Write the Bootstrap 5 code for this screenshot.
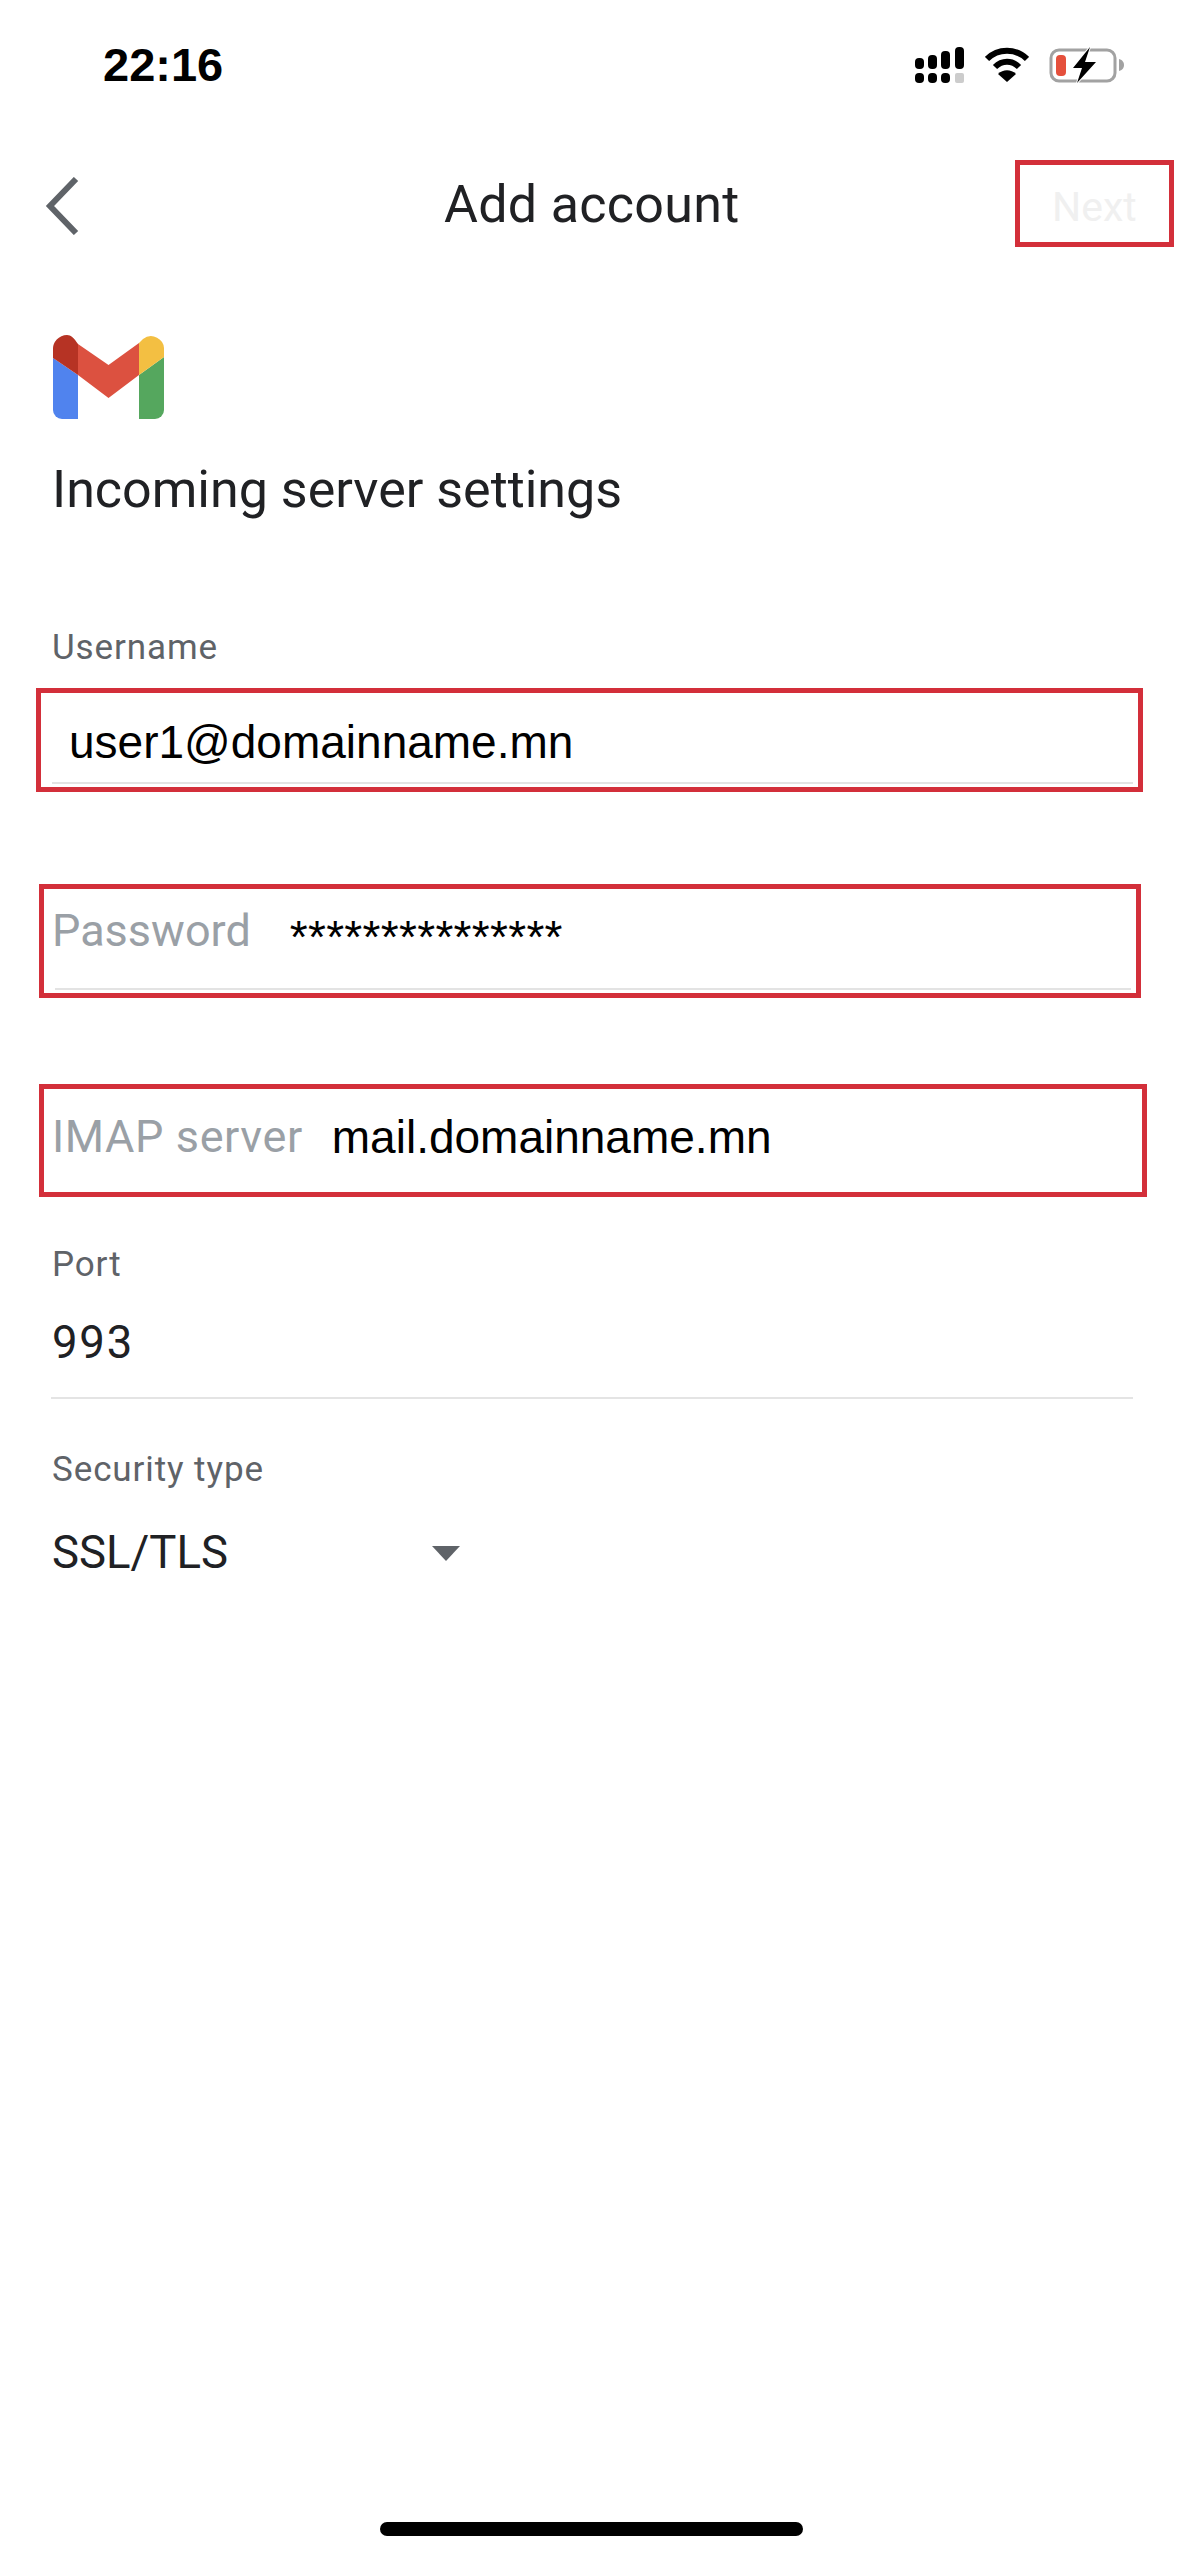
<!DOCTYPE html>
<html lang="en">
<head>
<meta charset="utf-8">
<title>Add account</title>
<link href="https://cdn.jsdelivr.net/npm/bootstrap@5.3.0/dist/css/bootstrap.min.css" rel="stylesheet">
<style>
html,body{background:#fff;}
body{font-family:Roboto,"Liberation Sans",sans-serif;color:#202124;width:1183px;height:2560px;overflow:hidden;position:relative;}
.sbar{height:130px;padding:40px 58px 0 103px;}
.sbar-time{font-family:"Liberation Sans",sans-serif;font-weight:700;font-size:47px;line-height:50px;color:#000;}
.topbar{height:116px;padding-left:45px;}
.topbar-title{font-size:52px;line-height:60px;color:#202124;letter-spacing:.3px;position:absolute;left:444px;top:175px;}
.outline{border:5px solid #d32f3a;}
.next-box{width:159px;height:87px;margin-right:9px;font-size:41px;color:#f0f0f0;padding:17px 0 0 32px;line-height:50px;}
.logo-wrap{padding:89px 0 0 53px;height:214px;}
.sect-title{font-size:52px;font-weight:400;line-height:60px;margin:0;padding-left:52px;color:#202124;}
.fld-label{font-size:35px;line-height:36px;color:#5f6368;padding-left:52px;letter-spacing:.9px;}
.boxed{height:104px;margin-left:36px;width:1107px;position:relative;}
.rule{height:2px;background:#e3e3e3;position:absolute;left:11px;right:5px;bottom:3px;}
.val-arial{font-family:"Liberation Sans",sans-serif;color:#000;font-size:46px;line-height:56px;}
.ph{color:#9aa0a6;font-size:45px;line-height:56px;}
.val{font-size:45.5px;line-height:50px;color:#202124;padding-left:52px;}
.divline{height:2px;background:#e4e4e4;margin:0 50px 0 51px;}
.tri{width:0;height:0;border-left:14px solid transparent;border-right:14px solid transparent;border-top:15px solid #5f6368;}
.home-pill{position:absolute;left:380px;top:2522px;width:423px;height:14px;border-radius:7px;background:#000;}
</style>
</head>
<body>
<div class="sbar d-flex justify-content-between align-items-start">
  <div class="sbar-time">22:16</div>
  <div class="d-flex align-items-start" style="gap:20px;margin-top:7px">
    <svg width="50" height="36" viewBox="0 0 50 36">
      <g fill="#000">
        <rect x="0" y="11" width="9" height="11" rx="4"/><rect x="13" y="8" width="9" height="14" rx="4"/><rect x="26" y="4" width="9" height="18" rx="4"/><rect x="40" y="0" width="9" height="22" rx="4"/>
        <rect x="0" y="26" width="9" height="10" rx="4"/><rect x="13" y="26" width="9" height="10" rx="4"/><rect x="26" y="26" width="9" height="10" rx="4"/>
      </g>
      <rect x="40" y="26" width="9" height="10" rx="2" fill="#ccc"/>
    </svg>
    <svg width="44" height="36" viewBox="0 0 44 36">
      <path d="M2 12C13 1 31 1 42 12" fill="none" stroke="#000" stroke-width="6"/>
      <path d="M10 20C17 13 27 13 34 20" fill="none" stroke="#000" stroke-width="6"/>
      <path d="M13 27C18 22 26 22 31 27L22 35Z" fill="#000"/>
    </svg>
    <svg width="76" height="36" viewBox="0 0 76 36">
      <rect x="2" y="3" width="64" height="31" rx="8" fill="none" stroke="#a2a2a2" stroke-width="3"/>
      <path d="M70 12c4 1 5 4 5 6s-1 5-5 6z" fill="#a2a2a2"/>
      <rect x="7" y="8" width="10" height="21" rx="4" fill="#e5503c"/>
      <path d="M24 21L41 0 L36 15 L47 15 L28 36 L33 21Z" fill="#000" stroke="#fff" stroke-width="2" paint-order="stroke"/>
    </svg>
  </div>
</div>
<div class="topbar d-flex justify-content-between align-items-start">
  <svg width="36" height="58" viewBox="0 0 36 58" style="margin-top:47px"><path d="M31 2L5 29L31 56" fill="none" stroke="#5f6368" stroke-width="6"/></svg>
  <div class="topbar-title">Add account</div>
  <div class="next-box outline" style="margin-top:30px">Next</div>
</div>
<div class="logo-wrap">
  <svg width="111" height="84" viewBox="0 0 111 84">
    <path d="M0 23L25 40V84H9a9 9 0 0 1-9-9Z" fill="#5083ee"/>
    <path d="M86 40L111 22V75a9 9 0 0 1-9 9H86Z" fill="#55a75e"/>
    <path d="M25 9L55.5 30L86 8V40L55.5 63L25 40Z" fill="#dc5140"/>
    <path d="M0 23V15A14 14 0 0 1 14 0C18 0 21 3 25 9V40Z" fill="#b63324"/>
    <path d="M86 8L90 4A13 13 0 0 1 111 15V22L86 40Z" fill="#f3bf42"/>
  </svg>
</div>
<h1 class="sect-title">Incoming server settings</h1>
<div class="fld-label" style="margin-top:110px">Username</div>
<div class="boxed outline d-flex align-items-start" style="margin-top:22px;padding:21px 0 0 28px">
  <span class="val-arial">user1@domainname.mn</span><div class="rule"></div>
</div>
<div class="boxed outline d-flex align-items-start" style="margin-top:92px;height:114px;margin-left:39px;width:1102px;padding:14px 0 0 8px">
  <span class="ph">Password</span><span class="val-arial" style="margin-left:39px;line-height:68px;letter-spacing:.3px">***************</span><div class="rule"></div>
</div>
<div class="boxed outline d-flex align-items-start" style="margin-top:86px;height:113px;margin-left:39px;width:1108px;padding:20px 0 0 8px">
  <span class="ph" style="letter-spacing:.6px">IMAP server</span><span class="val-arial" style="margin-left:29px">mail.domainname.mn</span>
</div>
<div class="fld-label" style="margin-top:50px">Port</div>
<div class="val" style="margin-top:35px;letter-spacing:1.8px">993</div>
<div class="divline" style="margin-top:29px"></div>
<div class="fld-label" style="margin-top:53px">Security type</div>
<div class="val d-flex align-items-center" style="margin-top:40px;height:50px"><span style="width:380px">SSL/TLS</span><div class="tri"></div></div>
<div class="home-pill"></div>
</body>
</html>
